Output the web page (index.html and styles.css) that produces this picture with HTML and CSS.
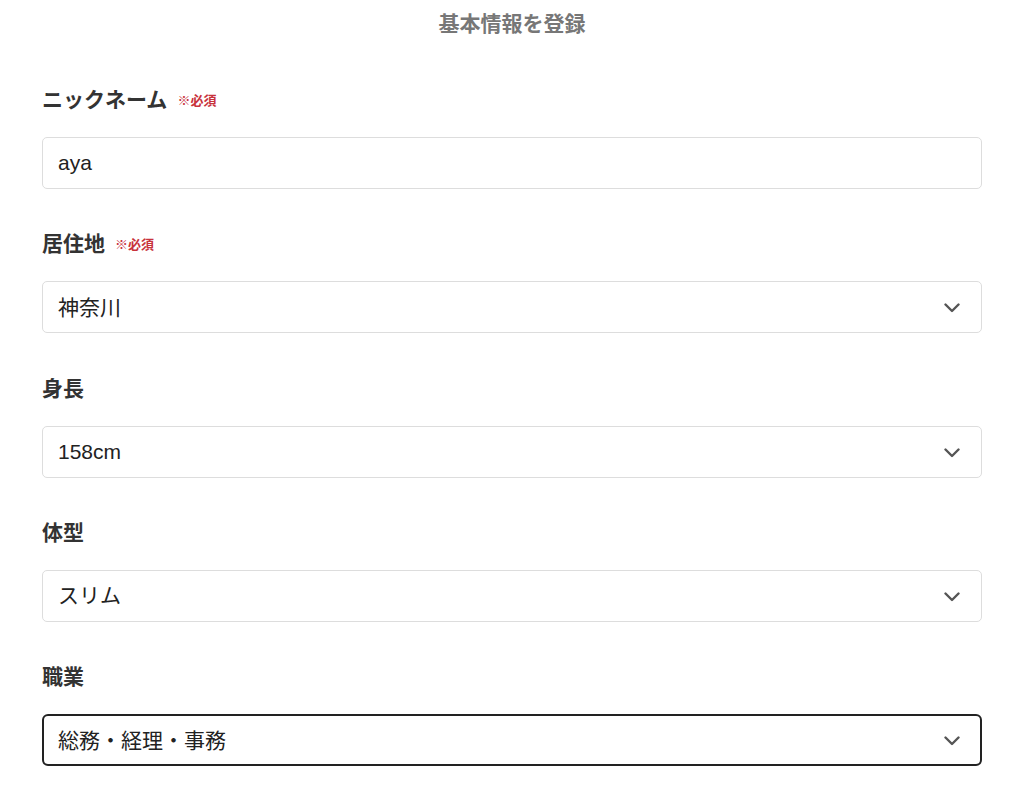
FILE: index.html
```html
<!DOCTYPE html>
<html lang="ja">
<head>
  <meta charset="UTF-8">
  <title>基本情報を登録</title>
  <link rel="stylesheet" href="styles.css">
</head>
<body>
  <h1 class="title">基本情報を登録</h1>

  <form class="form">
    <div class="field">
      <label class="label">ニックネーム<span class="required">※必須</span></label>
      <input class="control" type="text" value="aya">
    </div>

    <div class="field">
      <label class="label">居住地<span class="required">※必須</span></label>
      <div class="select-wrap">
        <select class="control">
          <option>神奈川</option>
        </select>
        <svg class="chevron" width="16" height="10" viewBox="0 0 16 10"><polyline points="1.5,1.5 8,8 14.5,1.5" fill="none" stroke="#555" stroke-width="2.4" stroke-linecap="round" stroke-linejoin="round"/></svg>
      </div>
    </div>

    <div class="field">
      <label class="label">身長</label>
      <div class="select-wrap">
        <select class="control">
          <option>158cm</option>
        </select>
        <svg class="chevron" width="16" height="10" viewBox="0 0 16 10"><polyline points="1.5,1.5 8,8 14.5,1.5" fill="none" stroke="#555" stroke-width="2.4" stroke-linecap="round" stroke-linejoin="round"/></svg>
      </div>
    </div>

    <div class="field">
      <label class="label">体型</label>
      <div class="select-wrap">
        <select class="control">
          <option>スリム</option>
        </select>
        <svg class="chevron" width="16" height="10" viewBox="0 0 16 10"><polyline points="1.5,1.5 8,8 14.5,1.5" fill="none" stroke="#555" stroke-width="2.4" stroke-linecap="round" stroke-linejoin="round"/></svg>
      </div>
    </div>

    <div class="field">
      <label class="label">職業</label>
      <div class="select-wrap">
        <select class="control focused">
          <option>総務・経理・事務</option>
        </select>
        <svg class="chevron" width="16" height="10" viewBox="0 0 16 10"><polyline points="1.5,1.5 8,8 14.5,1.5" fill="none" stroke="#555" stroke-width="2.4" stroke-linecap="round" stroke-linejoin="round"/></svg>
      </div>
    </div>
  </form>
</body>
</html>
```

FILE: styles.css
```css
* {
  margin: 0;
  padding: 0;
  box-sizing: border-box;
  font-family: "Liberation Sans", "Noto Sans CJK JP", sans-serif;
}

body {
  background: #fff;
  color: #222;
  padding: 9px 42px 0;
}

.title {
  text-align: center;
  font-size: 21px;
  line-height: 30px;
  font-weight: 700;
  color: #777;
  margin-bottom: 46px;
}

.field {
  margin-bottom: 40.3px;
}

.label {
  display: block;
  height: 30px;
  font-size: 21px;
  line-height: 30px;
  font-weight: 700;
  color: #333;
  margin-bottom: 22px;
}

.required {
  font-size: 13px;
  line-height: 1;
  color: #c8323c;
  margin-left: 10px;
  vertical-align: 2px;
}

.control {
  display: block;
  width: 100%;
  height: 52px;
  padding: 0 15px;
  font-size: 21px;
  color: #222;
  background: #fff;
  border: 1px solid #ddd;
  border-radius: 5px;
  outline: none;
  appearance: none;
  -webkit-appearance: none;
}

.control.focused {
  border: 2px solid #222;
  border-radius: 6px;
  padding-left: 14px;
}

.select-wrap {
  position: relative;
}

.chevron {
  position: absolute;
  right: 22px;
  top: 22px;
  pointer-events: none;
}
```
